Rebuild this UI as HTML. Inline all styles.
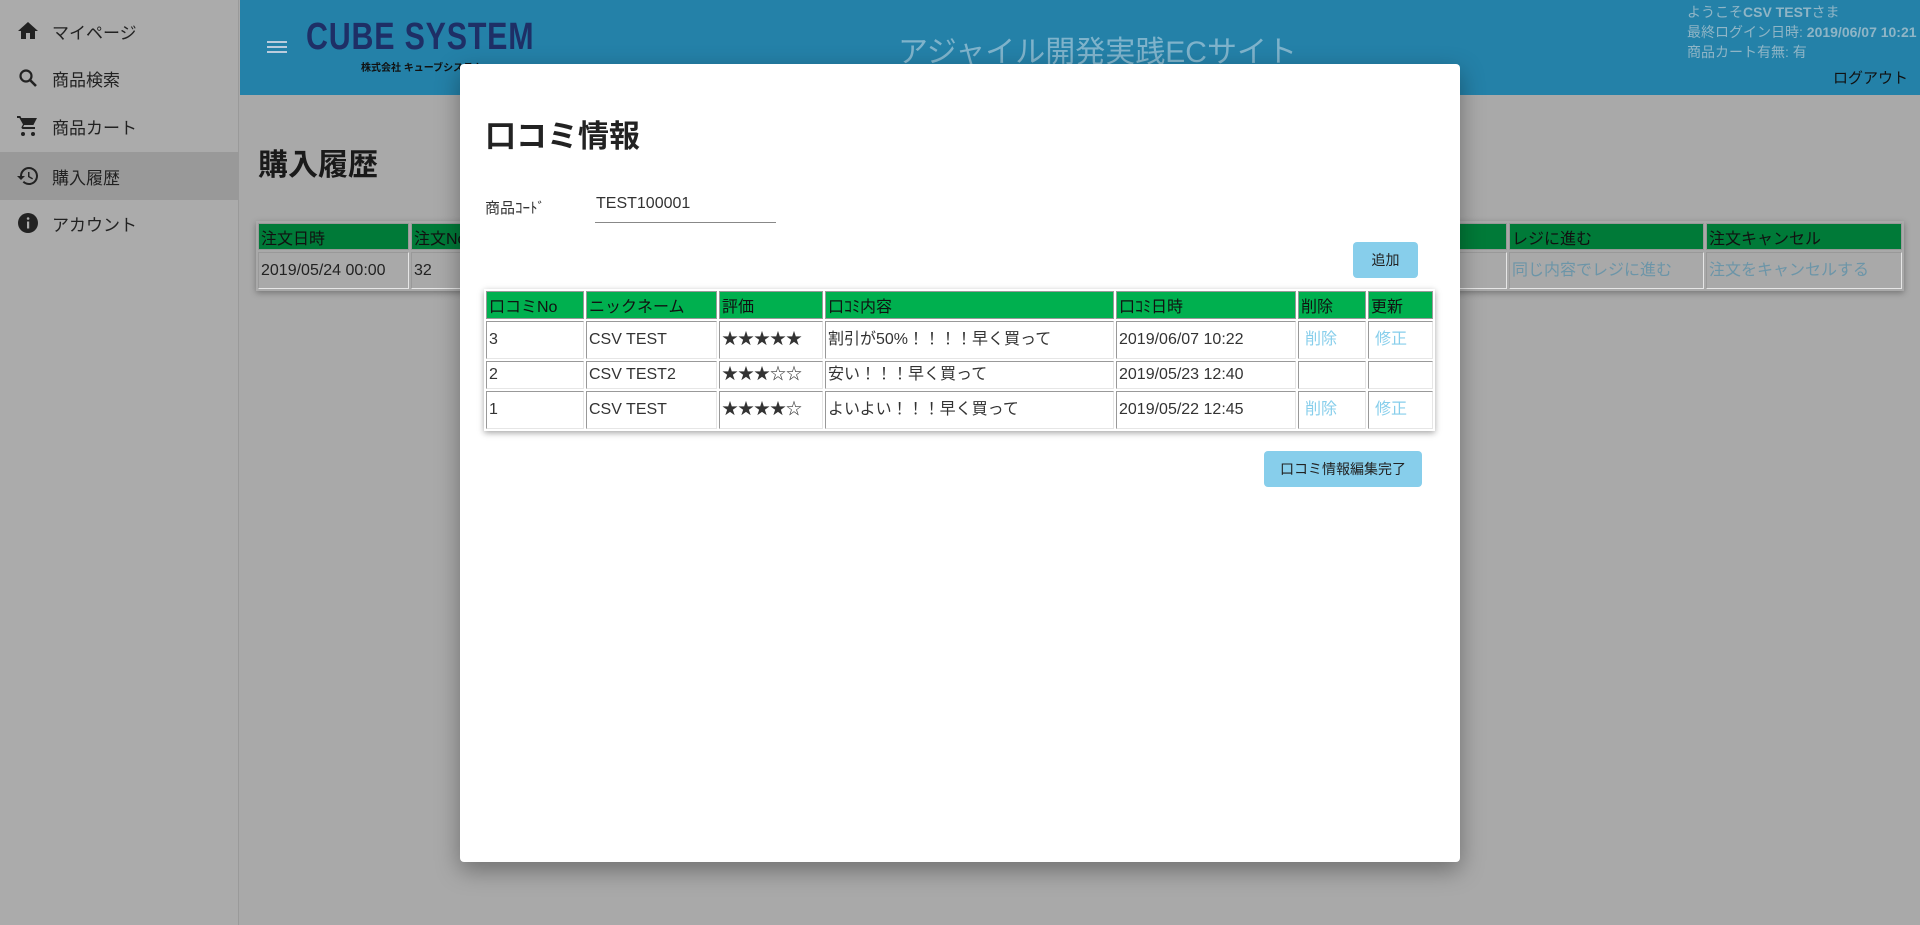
<!DOCTYPE html>
<html><head><meta charset="utf-8"><style>
*{box-sizing:border-box;margin:0;padding:0}
body{width:1920px;height:925px;position:relative;overflow:hidden;background:#a9a9a9;font-family:"Liberation Sans","Noto Sans CJK JP",sans-serif;color:#222}
.abs{position:absolute}
#side{left:0;top:0;width:239px;height:925px;background:#ababab;border-right:1px solid #9a9a9a}
.it{position:absolute;left:0;width:239px;height:48px;display:flex;align-items:center;font-size:17px;color:#222}
.it svg{position:absolute;left:16px}
.it span{position:absolute;left:52px}
#hdr{left:240px;top:0;width:1680px;height:95px;background:#2481a8}
table.t{border-collapse:separate;border-spacing:2px;font-size:16px}
table.t td{border:1px solid #999;border-right-color:#e6e6e6;border-bottom-color:#e6e6e6;padding:0 2px;white-space:nowrap;vertical-align:middle;line-height:20px}
table.t th{font-weight:normal;text-align:left;padding:0 2px;border:1px solid #999;white-space:nowrap;vertical-align:middle}
.lnk{color:#87ceeb}
.btn{position:absolute;background:#87ceeb;border-radius:4px;font-size:14px;color:#222;display:flex;align-items:center;justify-content:center}
</style></head><body>
<div id="side" class="abs">
 <div class="it" style="top:7px"><svg width="24" height="24" viewBox="0 0 24 24"><path d="M10 20v-6h4v6h5v-8h3L12 3 2 12h3v8z" fill="#222"/></svg><span>マイページ</span></div>
 <div class="it" style="top:54px"><svg width="24" height="24" viewBox="0 0 24 24"><circle cx="10" cy="10" r="5.5" fill="none" stroke="#222" stroke-width="2.2"/><path d="M14 14l6 6" stroke="#222" stroke-width="2.6"/></svg><span>商品検索</span></div>
 <div class="it" style="top:102px"><svg width="24" height="24" viewBox="0 0 24 24"><path d="M1 2h3.3l1 2H21l-3.6 7H8.1l-.9 1.7V13H19v2H7c-1.1 0-1.9-1.2-1.3-2.2L7 10.4 3.4 4H1z" fill="#222"/><circle cx="7" cy="20" r="2" fill="#222"/><circle cx="17" cy="20" r="2" fill="#222"/></svg><span>商品カート</span></div>
 <div class="it" style="top:152px;background:#999"><svg width="24" height="24" viewBox="0 0 24 24"><path d="M13 3a9 9 0 0 0-9 9H1l4 4 4-4H6a7 7 0 1 1 2.05 4.95l-1.42 1.42A9 9 0 1 0 13 3z" fill="#222"/><path d="M12 8v5l4.3 2.5.7-1.2-3.5-2.1V8z" fill="#222"/></svg><span>購入履歴</span></div>
 <div class="it" style="top:199px"><svg width="24" height="24" viewBox="0 0 24 24"><circle cx="12" cy="12" r="10" fill="#222"/><rect x="11" y="10.5" width="2.2" height="7" fill="#ababab"/><circle cx="12.1" cy="7.5" r="1.3" fill="#ababab"/></svg><span>アカウント</span></div>
</div>
<div id="hdr" class="abs">
 <svg class="abs" style="left:27px;top:40px" width="20" height="14"><rect y="1" width="20" height="2" fill="#bcd"/><rect y="6" width="20" height="2" fill="#bcd"/><rect y="11" width="20" height="2" fill="#bcd"/></svg>
 <div class="abs" style="left:66px;top:16px;font:bold 38px 'Liberation Sans Narrow','Liberation Sans',sans-serif;color:#1e2f66;letter-spacing:1px;transform:scaleX(.8);transform-origin:left">CUBE SYSTEM</div>
 <div class="abs" style="left:121px;top:59px;font-size:10px;font-weight:bold;color:#111">株式会社 キューブシステム</div>
 <div class="abs" style="left:658px;top:27px;font-size:30px;color:#7fb3cb">アジャイル開発実践ECサイト</div>
 <div class="abs" style="left:1447px;top:2px;font-size:14px;color:#8fb5c6;line-height:20px">ようこそ<b>CSV TEST</b>さま<br>最終ログイン日時: <b>2019/06/07 10:21</b><br>商品カート有無: 有</div>
 <div class="abs" style="left:1593px;top:67px;font-size:15px;color:#111">ログアウト</div>
</div>
<div class="abs" style="left:258px;top:140px;font-size:30px;font-weight:bold;color:#1a1a1a">購入履歴</div>
<div class="abs" style="left:256px;top:221px;background:#a9a9a9;box-shadow:0 2px 6px rgba(0,0,0,.3)">
<table class="t" style="font-size:16px"><tr style="height:27px"><th style="width:151px;background:#007a38;color:#111">注文日時</th><th style="width:1096px;background:#007a38;color:#111">注文No</th><th style="width:195px;background:#007a38;color:#111">レジに進む</th><th style="width:196px;background:#007a38;color:#111">注文キャンセル</th></tr>
<tr style="height:37px"><td>2019/05/24 00:00</td><td>32</td><td style="color:#6c95a8">同じ内容でレジに進む</td><td style="color:#6c95a8">注文をキャンセルする</td></tr></table></div>
<div class="abs" style="left:460px;top:64px;width:1000px;height:798px;background:#fff;border-radius:4px;box-shadow:0 8px 24px rgba(0,0,0,.35)">
 <div class="abs" style="left:25px;top:47px;font-size:31px;font-weight:bold;color:#222">口コミ情報</div>
 <div class="abs" style="left:25px;top:133px;font-size:15px;color:#333">商品ｺｰﾄﾞ</div>
 <div class="abs" style="left:135px;top:131px;width:181px;height:28px;border-bottom:1px solid #888;font-size:16px;color:#333;padding-left:1px">TEST100001</div>
 <div class="btn" style="left:893px;top:178px;width:65px;height:36px">追加</div>
 <div class="abs" style="left:24px;top:225px;background:#fff;box-shadow:0 2px 6px rgba(0,0,0,.35)">
 <table class="t" style="color:#333">
 <tr style="height:28px"><th style="width:98px;background:#00b04f;color:#111">口コミNo</th><th style="width:131px;background:#00b04f;color:#111">ニックネーム</th><th style="width:104px;background:#00b04f;color:#111">評価</th><th style="width:289px;background:#00b04f;color:#111">口ｺﾐ内容</th><th style="width:180px;background:#00b04f;color:#111">口ｺﾐ日時</th><th style="width:68px;background:#00b04f;color:#111">削除</th><th style="width:65px;background:#00b04f;color:#111">更新</th></tr>
 <tr style="height:38px"><td>3</td><td>CSV TEST</td><td>★★★★★</td><td>割引が50%！！！！早く買って</td><td>2019/06/07 10:22</td><td class="lnk" style="padding-left:6px">削除</td><td class="lnk" style="padding-left:6px">修正</td></tr>
 <tr style="height:28px"><td>2</td><td>CSV TEST2</td><td>★★★☆☆</td><td>安い！！！早く買って</td><td>2019/05/23 12:40</td><td></td><td></td></tr>
 <tr style="height:38px"><td>1</td><td>CSV TEST</td><td>★★★★☆</td><td>よいよい！！！早く買って</td><td>2019/05/22 12:45</td><td class="lnk" style="padding-left:6px">削除</td><td class="lnk" style="padding-left:6px">修正</td></tr>
 </table></div>
 <div class="btn" style="left:804px;top:387px;width:158px;height:36px">口コミ情報編集完了</div>
</div>
</body></html>
